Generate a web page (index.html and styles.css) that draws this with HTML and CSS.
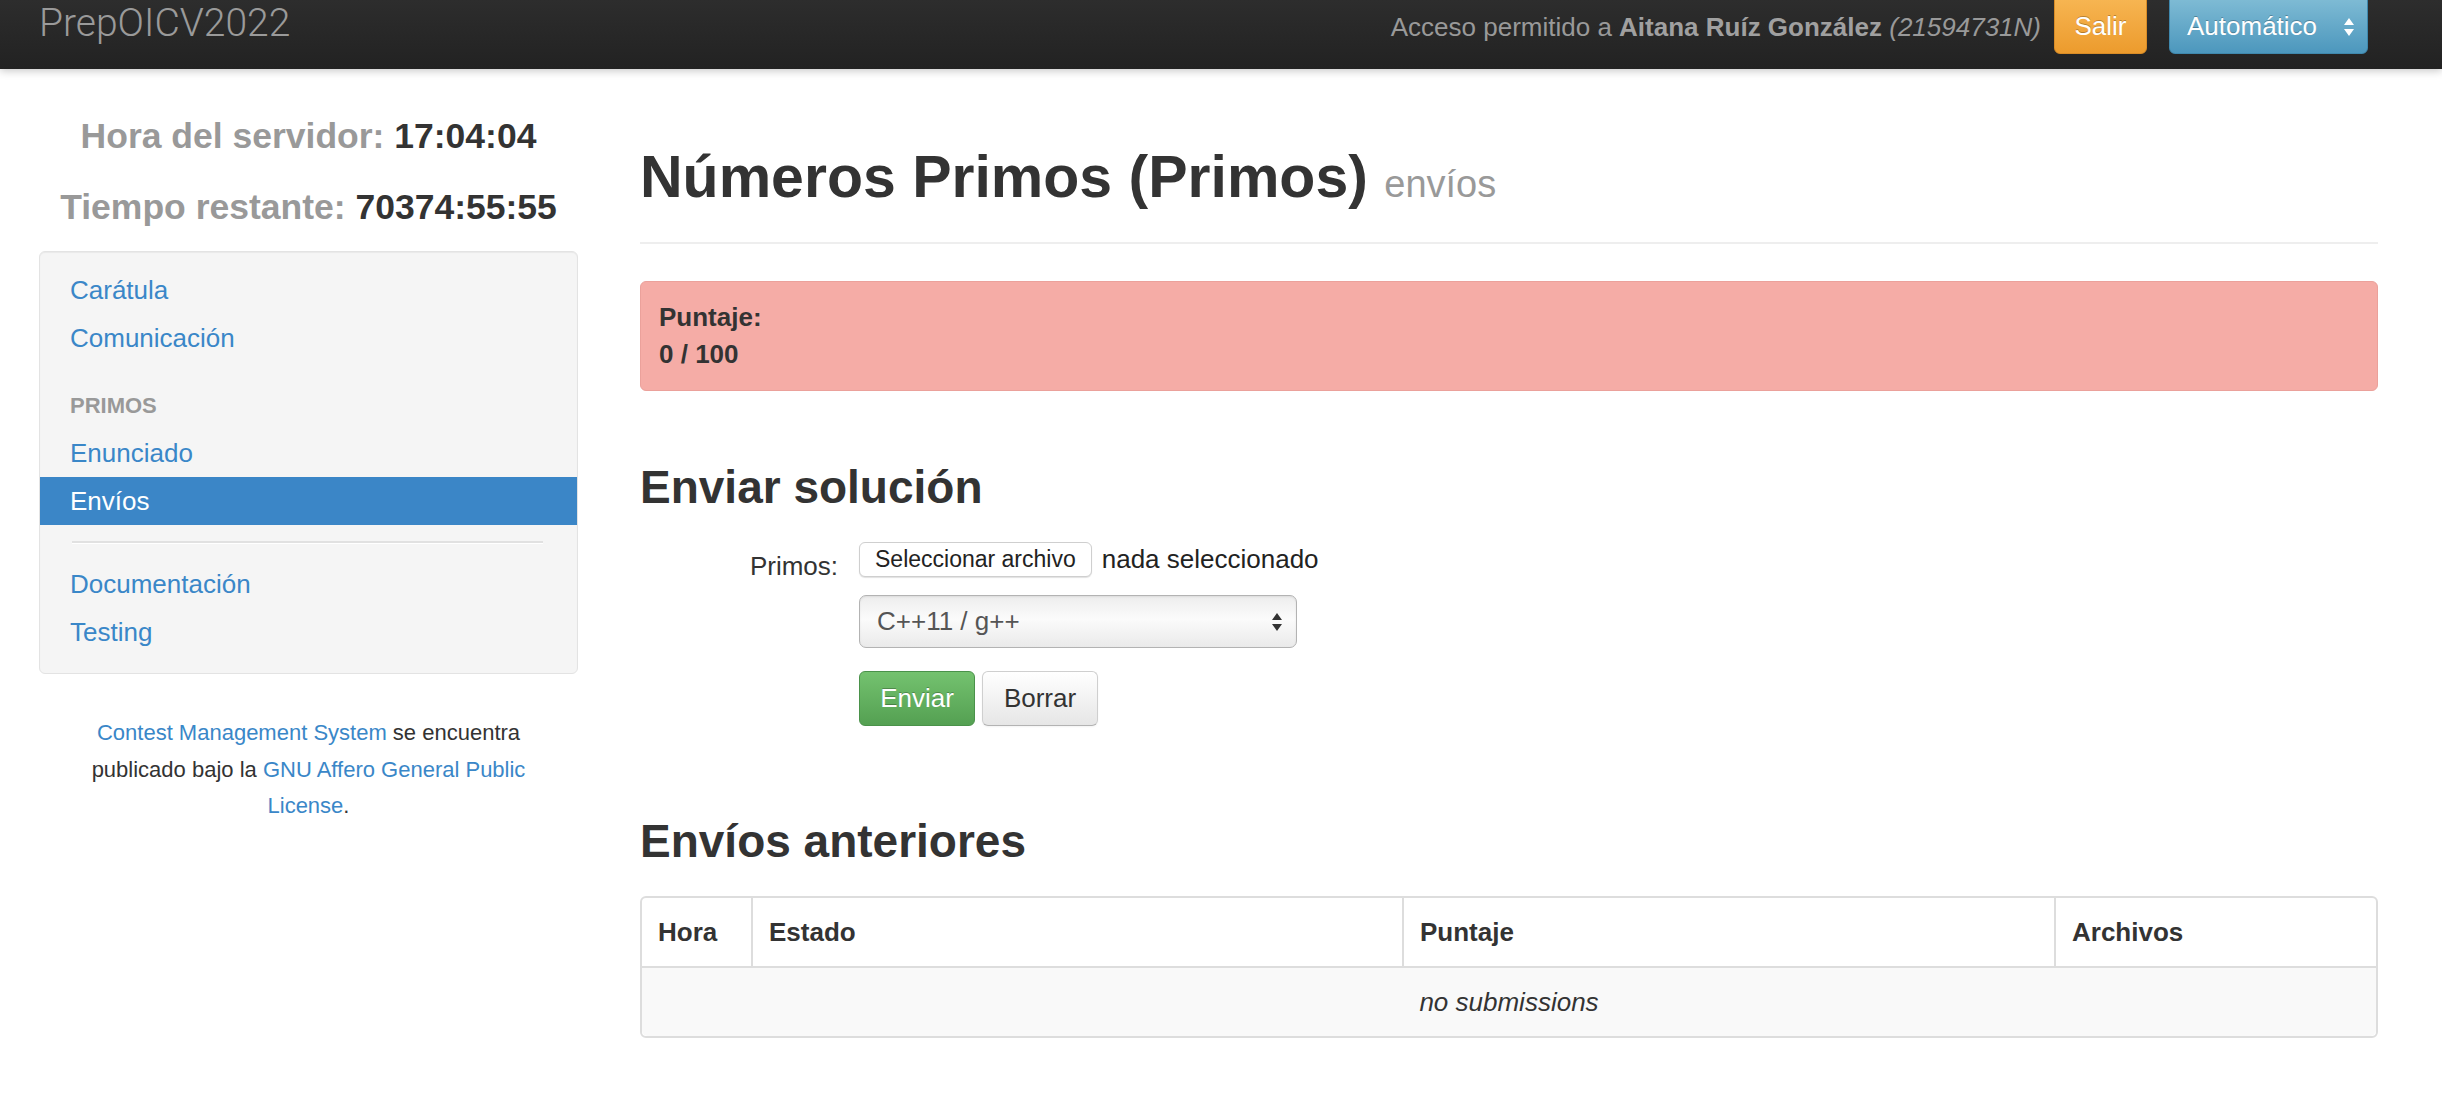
FILE: index.html
```html
<!DOCTYPE html>
<html lang="es">
<head>
<meta charset="utf-8">
<title>Números Primos (Primos) envíos</title>
<link rel="stylesheet" href="styles.css">
</head>
<body>
<header class="navbar">
  <div class="brand">PrepOICV2022</div>
  <div class="nav-right">
    <p class="login-info">Acceso permitido a <strong>Aitana Ruíz González</strong> <em>(21594731N)</em></p>
    <button class="btn btn-nav btn-warning" type="button">Salir</button>
    <div class="btn btn-nav btn-info lang-select">
      <span>Automático</span>
      <svg class="updown" width="12" height="20" viewBox="0 0 12 20"><path d="M6 1 L11 8 L1 8 Z M6 19 L11 12 L1 12 Z" fill="#fff"/></svg>
    </div>
  </div>
</header>

<div class="page">
  <aside class="sidebar">
    <div class="clock">
      <div class="clock-line"><span class="clock-label">Hora del servidor:</span> <span class="clock-value">17:04:04</span></div>
      <div class="clock-line"><span class="clock-label">Tiempo restante:</span> <span class="clock-value">70374:55:55</span></div>
    </div>
    <nav class="well">
      <ul class="nav-list">
        <li><a href="#">Carátula</a></li>
        <li><a href="#">Comunicación</a></li>
        <li class="nav-header">Primos</li>
        <li><a href="#">Enunciado</a></li>
        <li class="active"><a href="#">Envíos</a></li>
        <li class="divider"></li>
        <li><a href="#">Documentación</a></li>
        <li><a href="#">Testing</a></li>
      </ul>
    </nav>
    <p class="footer-note"><a href="#">Contest Management System</a> se encuentra<br>publicado bajo la <a href="#">GNU Affero General Public</a><br><a href="#">License</a>.</p>
  </aside>

  <main class="content">
    <div class="page-header">
      <h1>Números Primos (Primos) <small>envíos</small></h1>
    </div>

    <div class="alert">
      <div>Puntaje:</div>
      <div>0 / 100</div>
    </div>

    <h2 class="section-title first">Enviar solución</h2>
    <form class="submit-form">
      <div class="form-row row-file">
        <label class="control-label">Primos:</label>
        <div class="controls">
          <span class="file-btn">Seleccionar archivo</span>
          <span class="file-name">nada seleccionado</span>
        </div>
      </div>
      <div class="form-row row-select">
        <div class="controls">
          <div class="select-wrap">
            <span class="select-text">C++11 / g++</span>
            <svg class="updown" width="12" height="20" viewBox="0 0 12 20"><path d="M6 1 L11 8 L1 8 Z M6 19 L11 12 L1 12 Z" fill="#333"/></svg>
          </div>
        </div>
      </div>
      <div class="form-row row-buttons">
        <div class="controls">
          <button class="btn btn-success" type="button">Enviar</button>
          <button class="btn btn-default" type="button">Borrar</button>
        </div>
      </div>
    </form>

    <h2 class="section-title second">Envíos anteriores</h2>
    <table class="submissions">
      <thead>
        <tr>
          <th class="col-time">Hora</th>
          <th class="col-status">Estado</th>
          <th class="col-score">Puntaje</th>
          <th class="col-files">Archivos</th>
        </tr>
      </thead>
      <tbody>
        <tr><td colspan="4" class="empty">no submissions</td></tr>
      </tbody>
    </table>
  </main>
</div>
</body>
</html>
```

FILE: styles.css
```css
* { box-sizing: border-box; }

body {
  margin: 0;
  font-family: "Liberation Sans", Arial, Helvetica, sans-serif;
  font-size: 26px;
  line-height: 37px;
  color: #333;
  background: #fff;
}

a { color: #3a87c8; text-decoration: none; }

/* ---------- navbar ---------- */
.navbar {
  height: 69px;
  display: flex;
  justify-content: space-between;
  align-items: flex-start;
  padding: 0 74px 0 39px;
  background: linear-gradient(#2d2d2d, #222);
  box-shadow: 0 2px 8px rgba(0, 0, 0, 0.22);
  position: relative;
  z-index: 2;
}

.brand {
  font-family: Roboto, "Liberation Sans", sans-serif;
  font-weight: 300;
  font-size: 39px;
  line-height: 44px;
  color: #9a9a9a;
  margin-top: 1px;
}

.nav-right {
  display: flex;
  align-items: flex-start;
  height: 69px;
}

.login-info {
  margin: 0 13px 0 0;
  line-height: 54px;
  color: #999;
}
.login-info strong { font-weight: bold; color: #a0a0a0; }
.login-info em { font-style: italic; }

.btn {
  font-family: inherit;
  font-size: 26px;
  line-height: 37px;
  border-radius: 6px;
  cursor: pointer;
}

.btn-nav {
  margin-top: -8px;
  height: 62px;
  padding: 15px 20px 8px;
  color: #fff;
  text-shadow: 0 -1px 0 rgba(0, 0, 0, 0.25);
}

.btn-warning {
  background: linear-gradient(#f8b856, #ec9b2d);
  border: 1px solid #d98c26;
  width: 93px;
  padding-left: 0;
  padding-right: 0;
  text-align: center;
}

.btn-info {
  margin-left: 22px;
  width: 199px;
  background: linear-gradient(#84bfd7, #4c97bd);
  border: 1px solid #3f88ad;
  display: flex;
  align-items: flex-start;
  justify-content: space-between;
  padding-left: 17px;
  padding-right: 12px;
}
.btn-info .updown { margin-top: 9px; }

/* ---------- page ---------- */
.page {
  display: flex;
  gap: 62px;
  padding: 0 64px 40px 39px;
}

.sidebar {
  width: 539px;
  flex: none;
  padding-top: 46px;
}

.clock-line {
  font-size: 35.5px;
  line-height: 43px;
  font-weight: bold;
  text-align: center;
  margin-bottom: 28px;
}
.clock-line + .clock-line { margin-bottom: 22px; }
.clock-label { color: #999; }
.clock-value { color: #333; }

.well {
  background: #f5f5f5;
  border: 1px solid #e3e3e3;
  border-radius: 6px;
  box-shadow: inset 0 1px 1px rgba(0, 0, 0, 0.05);
  padding: 14px 0 17px;
}

.nav-list {
  list-style: none;
  margin: 0;
  padding: 0;
}
.nav-list a {
  display: block;
  padding: 5.5px 30px;
  line-height: 37px;
  color: #3a87c8;
}
.nav-list .active a {
  background: #3b86c7;
  color: #fff;
}
.nav-header {
  margin-top: 19px;
  padding: 5.5px 30px;
  font-size: 22px;
  line-height: 37px;
  font-weight: bold;
  color: #999;
  text-transform: uppercase;
}
.divider {
  height: 3px;
  margin: 16px 34px 16px 32px;
  background: #e1e1e1;
  border-bottom: 1px solid #fff;
}

.footer-note {
  margin: 41px 20px 0;
  text-align: center;
  font-size: 22px;
  line-height: 36.5px;
  color: #333;
}

/* ---------- content ---------- */
.content {
  flex: 1;
  min-width: 0;
}

.page-header {
  margin-top: 76px;
  padding-bottom: 25px;
  border-bottom: 2px solid #eee;
}
.page-header h1 {
  margin: 0;
  font-size: 59px;
  line-height: 65px;
  font-weight: bold;
  color: #333;
}
.page-header h1 small {
  font-size: 38px;
  font-weight: normal;
  color: #999;
}

.alert {
  margin-top: 37px;
  background: #f5aca6;
  border: 1px solid #eba19b;
  border-radius: 6px;
  padding: 17px 18px;
  font-weight: bold;
  color: #333;
}

.section-title {
  margin: 0;
  font-size: 46px;
  line-height: 55px;
  font-weight: bold;
  color: #333;
}
.section-title.first { margin-top: 69px; margin-bottom: 25px; }
.section-title.second { margin-top: 88px; margin-bottom: 27px; }

.submit-form { margin: 0; }

.form-row {
  display: flex;
  gap: 21px;
}
.row-file { margin-bottom: 16px; }
.row-select { margin-bottom: 23px; }

.control-label {
  width: 198px;
  flex: none;
  text-align: right;
  line-height: 26px;
  padding-top: 13px;
}

.row-select .controls,
.row-buttons .controls {
  margin-left: 219px;
}

.controls {
  display: flex;
  align-items: center;
  gap: 10px;
}

.file-btn {
  display: inline-block;
  height: 35px;
  padding: 0 15px;
  font-size: 23px;
  line-height: 33px;
  border: 1px solid #cfcfcf;
  border-radius: 6px;
  background: #fff;
  box-shadow: 0 1px 1px rgba(0, 0, 0, 0.12);
  color: #222;
}
.file-name { color: #222; }

.select-wrap {
  width: 438px;
  height: 53px;
  border: 1px solid #b3b3b3;
  border-radius: 7px;
  background: linear-gradient(#ededed, #fbfbfb 45%, #eaeaea);
  box-shadow: inset 0 1px 2px rgba(0, 0, 0, 0.08), 0 1px 0 rgba(255, 255, 255, 0.8);
  display: flex;
  align-items: center;
  justify-content: space-between;
  padding: 0 13px 0 17px;
  color: #555;
}

.row-buttons .controls { gap: 7px; }

.btn-success,
.btn-default {
  width: 116px;
  height: 55px;
  padding: 8px 0;
  text-align: center;
}
.btn-success {
  background: linear-gradient(#74c26f, #54a052);
  border: 1px solid #4a924a;
  color: #fff;
  text-shadow: 0 -1px 0 rgba(0, 0, 0, 0.25);
}
.btn-default {
  background: linear-gradient(#fff, #e6e6e6);
  border: 1px solid #cfcfcf;
  border-bottom-color: #b3b3b3;
  color: #333;
  box-shadow: inset 0 1px 0 rgba(255, 255, 255, 0.2), 0 1px 2px rgba(0, 0, 0, 0.05);
}

/* ---------- table ---------- */
.submissions {
  width: 100%;
  table-layout: fixed;
  border-collapse: separate;
  border-spacing: 0;
  border: 2px solid #ddd;
  border-radius: 6px;
}
.submissions th,
.submissions td {
  padding: 15.5px 16px;
  line-height: 37px;
  text-align: left;
}
.submissions th {
  font-weight: bold;
  border-bottom: 2px solid #ddd;
}
.submissions th + th { border-left: 2px solid #ddd; }
.col-time { width: 109px; }
.col-status { width: 651px; }
.col-score { width: 652px; }
.submissions td.empty {
  text-align: center;
  font-style: italic;
  background: #f9f9f9;
  border-radius: 0 0 6px 6px;
}
```
